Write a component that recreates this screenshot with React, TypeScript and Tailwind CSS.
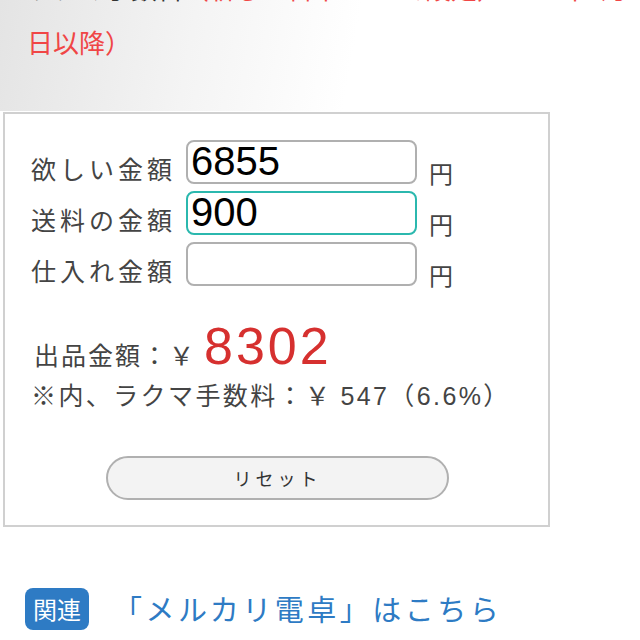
import React from "react";

const jp = { fontFamily: '"Noto Sans CJK JP", "Noto Sans", sans-serif' };
const num = { fontFamily: '"Liberation Sans", "Noto Sans CJK JP", sans-serif' };

function Row({ label, value, focused }: { label: string; value: string; focused?: boolean }) {
  return (
    <div className="flex items-end h-[44px]">
      <div className="w-[155px] text-[25px] leading-[30px] tracking-[4px] text-[#444] pb-[1px]">{label}</div>
      <div
        className={`w-[231px] h-[44px] rounded-[8px] bg-white border-2 flex items-end pb-[3px] px-[3px] ${
          focused ? "border-[#2bb8ae]" : "border-[#b0b0b0]"
        }`}
      >
        <span style={num} className="text-[40px] leading-[36px] text-black">{value}</span>
      </div>
      <div className="ml-[12px] text-[24px] leading-[28px] text-[#444] -mb-[3px]">円</div>
    </div>
  );
}

export default function App() {
  return (
    <div style={jp} className="w-[640px] h-[640px] overflow-hidden bg-white relative">
      <div className="flex flex-col bg-[linear-gradient(100deg,#e4e4e4_0%,#f4f4f4_30%,#ffffff_55%)] h-[111px]">
        <div className="-mt-[27px] pl-[27px] text-[26px] leading-[30px] whitespace-nowrap">
          <span className="text-[#333]">ラクマ手数料</span>
          <span className="text-[#f04646]">（新しい料率6.6%で設定）2021年4月</span>
        </div>
        <div className="mt-[19px] pl-[27px] text-[26px] leading-[40px] text-[#f04646]">日以降）</div>
      </div>
      <div className="ml-[3px] mt-[1px] w-[547px] h-[415px] border-2 border-[#d0d0d0] bg-white pt-[26px] pl-[26px]">
        <div className="flex flex-col gap-[7px]">
          <Row label="欲しい金額" value="6855" />
          <Row label="送料の金額" value="900" focused />
          <Row label="仕入れ金額" value="" />
        </div>
        <div className="mt-[36px] flex items-end text-[#444] pl-[3px]">
          <span className="text-[25px] leading-[30px] tracking-[2px] mb-[1px]">出品金額：￥</span>
          <span style={num} className="ml-[8px] text-[52px] leading-[48px] text-[#d6302f] tracking-[3px]">8302</span>
        </div>
        <div className="mt-[8px] text-[25px] leading-[32px] text-[#444] tracking-[2.4px] whitespace-nowrap">
          ※内、ラクマ手数料：￥ <span style={num}>547</span>（<span style={num}>6.6%</span>）
        </div>
        <div className="mt-[44px] ml-[75px] w-[343px] h-[44px] rounded-full border-2 border-[#b0b0b0] bg-[#f3f3f3] flex items-center justify-center text-[18px] tracking-[4px] text-[#333]">
          リセット
        </div>
      </div>
      <div className="mt-[60px] ml-[25px] flex items-center">
        <div className="w-[64px] h-[42px] rounded-[8px] bg-[#2e7bc4] text-white text-[24px] flex items-center justify-center">関連</div>
        <div className="ml-[24px] text-[29px] tracking-[3.5px] text-[#2e7bc4] whitespace-nowrap">「メルカリ電卓」はこちら</div>
      </div>
    </div>
  );
}
